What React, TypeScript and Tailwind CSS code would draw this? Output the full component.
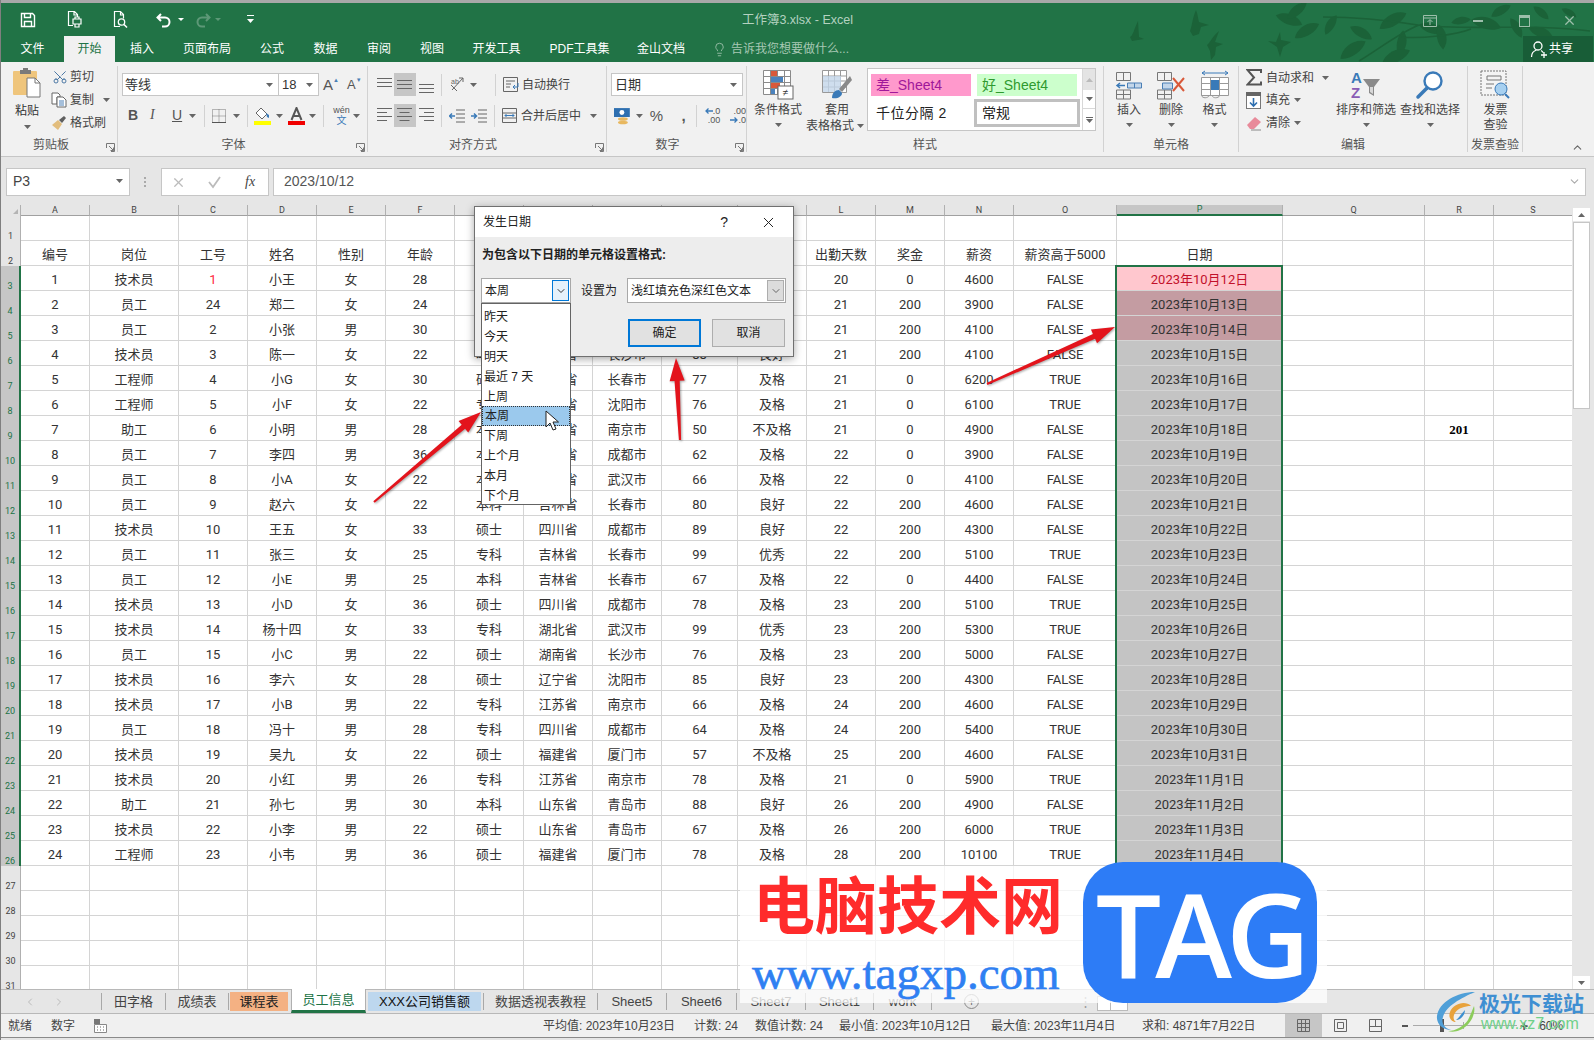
import type { ReactNode } from 'react'
import { Scissors, Lightbulb, X, ChevronDown, ChevronUp, ChevronLeft, ChevronRight } from 'lucide-react'

const COLS = [
  'w-[69px]', 'w-[89px]', 'w-[69px]', 'w-[69px]', 'w-[69px]', 'w-[69px]', 'w-[69px]', 'w-[69px]', 'w-[69px]',
  'w-[76px]', 'w-[69px]', 'w-[69px]', 'w-[69px]', 'w-[69px]', 'w-[103px]', 'w-[166px]', 'w-[142px]', 'w-[69px]', 'w-[79px]',
]
const LETTERS = ['A', 'B', 'C', 'D', 'E', 'F', 'G', 'H', 'I', 'J', 'K', 'L', 'M', 'N', 'O', 'P', 'Q', 'R', 'S']
const HEADER = ['编号', '岗位', '工号', '姓名', '性别', '年龄', '学历', '籍贯', '城市', '分数', '等级', '出勤天数', '奖金', '薪资', '薪资高于5000', '日期']

const DATA = [
  '1 技术员 1 小王 女 28 本科 江苏省 南京市 70 及格 20 0 4600 FALSE',
  '2 员工 24 郑二 女 24 本科 四川省 成都市 68 及格 21 200 3900 FALSE',
  '3 员工 2 小张 男 30 硕士 湖北省 武汉市 72 及格 21 200 4100 FALSE',
  '4 技术员 3 陈一 女 22 本科 湖南省 长沙市 88 良好 21 200 4100 FALSE',
  '5 工程师 4 小G 女 30 硕士 吉林省 长春市 77 及格 21 0 6200 TRUE',
  '6 工程师 5 小F 女 22 专科 辽宁省 沈阳市 76 及格 21 0 6100 TRUE',
  '7 助工 6 小明 男 28 本科 江苏省 南京市 50 不及格 21 0 4900 FALSE',
  '8 员工 7 李四 男 36 本科 四川省 成都市 62 及格 22 0 3900 FALSE',
  '9 员工 8 小A 女 22 本科 湖北省 武汉市 66 及格 22 0 4100 FALSE',
  '10 员工 9 赵六 女 22 本科 吉林省 长春市 80 良好 22 200 4600 FALSE',
  '11 技术员 10 王五 女 33 硕士 四川省 成都市 89 良好 22 200 4300 FALSE',
  '12 员工 11 张三 女 25 专科 吉林省 长春市 99 优秀 22 200 5100 TRUE',
  '13 员工 12 小E 男 25 本科 吉林省 长春市 67 及格 22 0 4400 FALSE',
  '14 技术员 13 小D 女 36 硕士 四川省 成都市 78 及格 23 200 5100 TRUE',
  '15 技术员 14 杨十四 女 33 专科 湖北省 武汉市 99 优秀 23 200 5300 TRUE',
  '16 员工 15 小C 男 22 硕士 湖南省 长沙市 76 及格 23 200 5000 FALSE',
  '17 技术员 16 李六 女 28 硕士 辽宁省 沈阳市 85 良好 23 200 4300 FALSE',
  '18 技术员 17 小B 男 22 专科 江苏省 南京市 66 及格 24 200 4600 FALSE',
  '19 员工 18 冯十 男 28 专科 四川省 成都市 64 及格 24 200 5400 TRUE',
  '20 技术员 19 吴九 女 22 硕士 福建省 厦门市 57 不及格 25 200 4600 FALSE',
  '21 技术员 20 小红 男 26 专科 江苏省 南京市 78 及格 21 0 5900 TRUE',
  '22 助工 21 孙七 男 30 本科 山东省 青岛市 88 良好 26 200 4900 FALSE',
  '23 技术员 22 小李 男 22 硕士 山东省 青岛市 67 及格 26 200 6000 TRUE',
  '24 工程师 23 小韦 男 36 硕士 福建省 厦门市 78 及格 28 200 10100 TRUE',
].map(r => r.split(' '))

const DATES = [
  ...Array.from({ length: 20 }, (_, i) => `2023年10月${i + 12}日`),
  ...Array.from({ length: 4 }, (_, i) => `2023年11月${i + 1}日`),
]

const MENU: [string, string][] = [
  ['文件', 'w-[63px]'], ['开始', 'w-[51px]'], ['插入', 'w-[54px]'], ['页面布局', 'w-[76px]'], ['公式', 'w-[54px]'],
  ['数据', 'w-[53px]'], ['审阅', 'w-[54px]'], ['视图', 'w-[52px]'], ['开发工具', 'w-[77px]'], ['PDF工具集', 'w-[89px]'], ['金山文档', 'w-[74px]'],
]

function Caret({ className = '' }: { className?: string }) {
  return (
    <svg width="7" height="4" viewBox="0 0 7 4" className={className}>
      <path d="M0 0h7L3.5 4z" fill="#666" />
    </svg>
  )
}

function Group({ w, label, labelPad = '', launcher, children }: { w: string; label: string; labelPad?: string; launcher?: boolean; children: ReactNode }) {
  return (
    <div className={`relative flex h-[86px] shrink-0 flex-col border-r border-[#d2d2d2] ${w}`}>
      <div className="relative h-[72px]">{children}</div>
      <div className={`mt-[2px] text-center text-xs leading-[14px] text-[#555] ${labelPad}`}>{label}</div>
      {launcher && (
        <svg width="9" height="9" viewBox="0 0 9 9" className="absolute bottom-0 right-[2px]">
          <path d="M.5 5V.5H8.5V8.5H5M3 3L7.5 7.5M7.5 4.5V7.5H4.5" fill="none" stroke="#777" />
        </svg>
      )}
    </div>
  )
}

function Big({ w, ml, icon, lines, caret = true }: { w: string; ml?: string; icon: ReactNode; lines: string[]; caret?: boolean }) {
  return (
    <div className={`flex shrink-0 flex-col items-center ${w} ${ml ?? ''}`}>
      <div className="mt-[4px] mb-[2px] flex h-[30px] items-center justify-center">{icon}</div>
      {lines.map(l => <div key={l} className="mt-[1px] whitespace-nowrap text-xs leading-[14px] text-[#444]">{l}</div>)}
      {caret && <Caret className="mt-[6px]" />}
    </div>
  )
}

function AlignLines({ y, side }: { y: number; side: 'l' | 'c' | 'r' | 'f' }) {
  const ws = side === 'f' ? [15, 15, 15] : [15, 10, 15, 10]
  return (
    <svg width="16" height="18" viewBox="0 0 16 18">
      {ws.map((w, i) => {
        const x = side === 'l' ? 0 : side === 'r' ? 15 - w : (15 - w) / 2
        return <rect key={i} x={x} y={y + i * 4} width={w} height="1" fill="#666" />
      })}
    </svg>
  )
}

function Arrow({ x1, y1, x2, y2 }: { x1: number; y1: number; x2: number; y2: number }) {
  const d = Math.hypot(x2 - x1, y2 - y1)
  const ux = (x2 - x1) / d
  const uy = (y2 - y1) / d
  const bx = x2 - ux * 23
  const by = y2 - uy * 23
  const pts = [
    [x1 - uy * 1.1, y1 + ux * 1.1], [bx - uy * 2.6, by + ux * 2.6], [bx - uy * 7.5, by + ux * 7.5], [x2, y2],
    [bx + uy * 7.5, by - ux * 7.5], [bx + uy * 2.6, by - ux * 2.6], [x1 + uy * 1.1, y1 - ux * 1.1],
  ]
  return <polygon points={pts.map(p => p.join(',')).join(' ')} fill="#e3141c" />
}

function Decor() {
  const leaves: [number, number, number, number][] = [
    [1288, 17, 20, 1], [1296, 8, -40, 0.9], [1306, 28, -30, 1], [1330, 22, -60, 0.8], [1352, 47, -35, 1.1],
    [1360, 30, 30, 0.9], [1392, 18, -30, 1.1], [1400, 40, 100, 0.9], [1430, 26, 20, 0.9], [1395, 54, -25, 1.1],
    [1440, 34, 80, 0.9], [1460, 18, -10, 0.7], [1485, 21, 15, 1.1], [1500, 8, -30, 0.8], [1515, 25, 60, 0.8], [1540, 30, 20, 0.9], [1540, 10, 40, 0.7], [1568, 10, 30, 0.6],
  ]
  return (
    <svg className="pointer-events-none absolute inset-0" width="1594" height="62" viewBox="0 0 1594 62">
      <g fill="#1b6238">
        <path d="M1129 34c3-1 4-8 8-16l1 16 5 2-12 2z" />
        <path d="M1189 28c2-4 2-12 6-21 2 5 2 9 3 12l10 3-8 2-2 7-6 2z" />
        <path d="M1206 42c3-2 4-7 12-14l-4 11 8 2-7 3-1 8-4 5-1-9z" />
        <path d="M1267 38l8 1 4-10 1 8 10 2-8 5-3 10-3-10z" />
        {leaves.map(([x, y, r, s], i) => (
          <path key={i} transform={`translate(${x} ${y}) rotate(${r}) scale(${s})`} d="M-14 0C-7 -8 7 -8 14 0C7 6 -7 6 -14 0Z" />
        ))}
      </g>
      <path d="M1322 14c40 0 70 4 95 8 50 6 110-2 172 6M1418 22c-20 8-40 24-60 36M1470 26c-15 6-50 10-70 8" stroke="#1b6238" strokeWidth="1.6" fill="none" />
    </svg>
  )
}

function Swirl() {
  return (
    <svg width="46" height="44" viewBox="0 0 46 44">
      <path d="M40 2C22 2 4 12 2 26c-1 8 6 14 14 14-7-2-10-7-8-13C11 16 26 8 40 2z" fill="#4f9fd8" />
      <path d="M36 16C30 10 18 14 15 22c-2 5 1 10 6 10-3-2-3-6-1-9 3-5 10-7 16-7z" fill="#e8a23c" />
      <path d="M39 16c2 8-4 20-14 24-4 2-9 2-12 1 8 0 16-5 20-11 2-4 4-9 6-14z" fill="#8ccc5c" />
      <path d="M30 20c0 5-4 10-9 10 3-2 5-6 9-10z" fill="#3d8fd0" />
    </svg>
  )
}

export default function App() {
  return (
    <div className="relative flex h-[1040px] w-[1594px] flex-col overflow-hidden border-l border-[#7f7f7f] bg-[#e6e6e6] font-['Liberation_Sans','Noto_Sans_CJK_SC',sans-serif] text-xs text-[#444]">
      <div className="h-[3px] shrink-0 bg-[#a8a8a8]" />

      {/* Title + menu */}
      <div className="relative h-[59px] shrink-0 bg-[#217346]">
        <Decor />
        <div className="relative flex h-[33px] items-center">
          <svg width="16" height="16" viewBox="0 0 16 16" className="ml-[19px]">
            <path d="M1.500 1.500h11l2 2v11h-13zM4.500 1.500v4h6v-4M4.500 14.500v-5h7v5" fill="none" stroke="#fff" strokeWidth="1.4" />
          </svg>
          <svg width="18" height="19" viewBox="0 0 18 19" className="ml-[29px]">
            <path d="M8 15.500H3.500v-14h6l3 3v3M9 1.500v3.500h3.500" fill="none" stroke="#fff" strokeWidth="1.2" />
            <path d="M8 9h8v5H8zM10 9V7h4v2M10 14v3h4v-3" fill="#217346" stroke="#fff" strokeWidth="1.2" />
          </svg>
          <svg width="18" height="19" viewBox="0 0 18 19" className="ml-[28px]">
            <path d="M9 16.500H3.500v-15h6l3 3v4M9.500 1.500v3.500h3" fill="none" stroke="#fff" strokeWidth="1.200" />
            <circle cx="10.500" cy="12" r="3.200" fill="none" stroke="#fff" strokeWidth="1.300" />
            <path d="M13 14.500l3 3" stroke="#fff" strokeWidth="1.600" />
          </svg>
          <svg width="16" height="16" viewBox="0 0 16 16" className="ml-[27px]">
            <path d="M5 2L1.500 5.500 5 9M2 5.500h7a4.500 4.500 0 0 1 0 9H6" fill="none" stroke="#fff" strokeWidth="2" />
          </svg>
          <svg width="6" height="3" viewBox="0 0 6 3" className="ml-[6px]"><path d="M0 0h6L3 3z" fill="#fff" /></svg>
          <svg width="16" height="16" viewBox="0 0 16 16" className="ml-[11px]">
            <path d="M11 2l3.500 3.500L11 9M14 5.500H7a4.500 4.500 0 0 0 0 9h3" fill="none" stroke="#5d9877" strokeWidth="2" />
          </svg>
          <svg width="6" height="3" viewBox="0 0 6 3" className="ml-[4px]"><path d="M0 0h6L3 3z" fill="#5d9877" /></svg>
          <svg width="7" height="9" viewBox="0 0 7 9" className="ml-[26px]"><path d="M0 0h7v1H0zM0 4h7L3.500 8z" fill="#fff" /></svg>
        </div>
        <div className="absolute left-0 right-0 top-[9px] text-center text-[12.5px] leading-4 text-[#b4d2c0]">工作簿3.xlsx - Excel</div>
        <div className="absolute right-[17px] top-[10px] flex items-center">
          <svg width="14" height="12" viewBox="0 0 14 12"><path d="M.5.500h13v11H.5zM.5 3h13M7 10V5M4.500 7L7 4.500 9.500 7" fill="none" stroke="#9dbfab" /></svg>
          <div className="ml-[36px] h-[2px] w-[10px] bg-[#9dbfab]" />
          <div className="ml-[36px] h-[12px] w-[11px] border border-t-[3px] border-[#9dbfab]" />
          <X size={15} strokeWidth={2} className="ml-[32px] text-[#9dbfab]" />
        </div>
        <div className="relative flex h-[26px] items-stretch">
          {MENU.map(([t, w]) => (
            <div key={t} className={`flex items-center justify-center ${w} ${t === '开始' ? 'bg-[#f1f1f1] text-[#217346]' : 'text-white'}`}>{t}</div>
          ))}
          <Lightbulb size={15} strokeWidth={1.3} className="ml-[14px] self-center text-[#a7c8b4]" />
          <div className="ml-[4px] self-center text-[#a7c8b4]">告诉我您想要做什么...</div>
          <div className="absolute bottom-0 right-[1px] top-0 flex w-[70px] items-center bg-[#185d37] pl-[7px] text-white">
            <svg width="18" height="18" viewBox="0 0 18 18"><circle cx="8" cy="6" r="4" fill="none" stroke="#fff" strokeWidth="1.300" /><path d="M1.500 17c0-4 2-6 5-7M11 10.500c1 .5 1.500 1 2 2M11 15h6M14 12v6" fill="none" stroke="#fff" strokeWidth="1.300" /></svg>
            <span className="ml-[1px]">共享</span>
          </div>
        </div>
      </div>

      {/* Ribbon */}
      <div className="relative flex h-[95px] shrink-0 border-b border-[#c6c6c6] bg-[#f1f1f1] pt-[4px]">
        <Group w="w-[117px]" label="剪贴板" labelPad="pr-[16px]" launcher>
          <div className="flex">
            <div className="ml-[8px] flex w-[36px] flex-col items-center">
              <svg width="30" height="32" viewBox="0 0 30 32" className="mt-[1px]">
                <rect x="1" y="4" width="24" height="24" rx="1" fill="#efc57c" />
                <path d="M8 3h3V1h5v2h3v4H8z" fill="#7a7a7a" />
                <path d="M15 11h8l5 5v14H15z" fill="#fff" stroke="#777" />
                <path d="M23 11v5h5" fill="none" stroke="#777" />
              </svg>
              <div className="mt-[5px] leading-[14px] text-[#333]">粘贴</div>
              <Caret className="mt-[7px]" />
            </div>
            <div className="ml-[6px] -mt-px flex flex-col">
              <div className="flex h-[23px] items-center"><Scissors size={16} strokeWidth={1.4} className="ml-px -rotate-90 text-[#41709f]" /><span className="ml-[2px] text-[#444]">剪切</span></div>
              <div className="flex h-[23px] items-center">
                <svg width="16" height="16" viewBox="0 0 16 16"><path d="M1 1h6l2 2v2H6v7H1z" fill="#fff" stroke="#666" /><path d="M6 5h6l3 3v7H6z" fill="#fff" stroke="#666" /><path d="M8 9h5M8 11h5M8 13h5" stroke="#4a7fb5" /></svg>
                <span className="ml-[3px]">复制</span><Caret className="ml-[9px]" />
              </div>
              <div className="flex h-[23px] items-center">
                <svg width="16" height="16" viewBox="0 0 16 16"><path d="M1 10l6-5 4 4-4 6z" fill="#e2bd7d" /><path d="M8 5l5-4 2 2-4 5z" fill="#5f5f5f" /></svg>
                <span className="ml-[3px]">格式刷</span>
              </div>
            </div>
          </div>
        </Group>

        <Group w="w-[250px]" label="字体" labelPad="pr-[18px]" launcher>
          <div className="mt-[7px] flex items-center">
            <div className="ml-[4px] flex h-[23px] w-[157px] items-center justify-between border border-[#c6c6c6] bg-white px-[2px] pr-[5px] text-[13px] text-[#333]">等线<Caret /></div>
            <div className="flex h-[23px] w-[40px] items-center justify-between border border-l-0 border-[#c6c6c6] bg-white pl-[3px] pr-[5px] text-[13px] text-[#333]">18<Caret /></div>
            <div className="ml-[4px] flex items-start font-['Liberation_Sans'] text-[15px] leading-4 text-[#555]">A<span className="text-[6px] leading-[6px] text-[#4a7fb5]">▲</span></div>
            <div className="ml-[8px] flex items-start font-['Liberation_Sans'] text-[13px] leading-4 text-[#555]">A<span className="text-[6px] leading-[6px] text-[#4a7fb5]">▼</span></div>
          </div>
          <div className="mt-[8px] flex h-[23px] items-center text-[14px] text-[#555]">
            <span className="ml-[10px] w-[22px] font-bold">B</span>
            <span className="w-[22px] font-['Liberation_Serif'] italic">I</span>
            <span className="w-[17px] font-medium underline">U</span>
            <Caret />
            <div className="ml-[8px] h-[22px] w-px bg-[#d2d2d2]" />
            <svg width="14" height="14" viewBox="0 0 14 14" className="ml-[7px]"><path d="M.5.500h13v13H.5zM.5 7h13M7 .500v13" fill="none" stroke="#777" strokeDasharray="1 1" /><path d="M0 13.500h14" stroke="#555" /></svg>
            <Caret className="ml-[7px]" />
            <div className="ml-[7px] h-[22px] w-px bg-[#d2d2d2]" />
            <svg width="17" height="18" viewBox="0 0 17 18" className="ml-[6px]"><path d="M7 1l6 6-5 5-6-6z" fill="#fff" stroke="#666" /><path d="M12 6l3 2v3l-2-1z" fill="#3a7ab8" /><rect y="14" width="17" height="4" fill="#ffff00" /></svg>
            <Caret className="ml-[5px]" />
            <svg width="17" height="18" viewBox="0 0 17 18" className="ml-[5px]"><path d="M3.500 13L8.500 1l5 12M5.500 9h6" fill="none" stroke="#555" strokeWidth="2" /><rect y="14" width="17" height="4" fill="#f00000" /></svg>
            <Caret className="ml-[4px]" />
            <div className="ml-[7px] h-[22px] w-px bg-[#d2d2d2]" />
            <div className="ml-[9px] flex w-[17px] flex-col items-center text-[9px] leading-[9px] text-[#555]">wén<span className="text-[10px] leading-[11px] text-[#3a7ab8]">文</span></div>
            <Caret className="ml-[3px]" />
          </div>
        </Group>

        <Group w="w-[239px]" label="对齐方式" labelPad="pr-[28px]" launcher>
          <div className="mt-[7px] flex h-[23px] items-center">
            <div className="ml-[8px] flex w-[18px] justify-center"><AlignLines y={2} side="f" /></div>
            <div className="flex h-[23px] w-[22px] items-center justify-center bg-[#c6c6c6]"><AlignLines y={4} side="f" /></div>
            <div className="ml-[2px] flex w-[18px] justify-center"><AlignLines y={8} side="f" /></div>
            <div className="ml-[5px] h-[22px] w-px bg-[#d2d2d2]" />
            <svg width="17" height="17" viewBox="0 0 17 17" className="ml-[7px]"><path d="M2 9l6 6M14 2L3 14M14 2h-4M14 2v4" fill="none" stroke="#666" /><text x="2" y="8" fontSize="7" fill="#666">ab</text></svg>
            <Caret className="ml-[4px]" />
            <div className="ml-[18px] h-[22px] w-px bg-[#d2d2d2]" />
            <svg width="16" height="16" viewBox="0 0 16 16" className="ml-[7px]"><path d="M.5.500h14v14H.5zM3 4h9M3 7h5M3 10h4" fill="none" stroke="#666" /><path d="M15 6v4H10M12 8l-2 2 2 2" fill="none" stroke="#3a7ab8" /></svg>
            <span className="ml-[3px]">自动换行</span>
          </div>
          <div className="mt-[8px] flex h-[23px] items-center">
            <div className="ml-[8px] flex w-[18px] justify-center"><AlignLines y={1} side="l" /></div>
            <div className="flex h-[23px] w-[22px] items-center justify-center bg-[#c6c6c6]"><AlignLines y={1} side="c" /></div>
            <div className="ml-[2px] flex w-[18px] justify-center"><AlignLines y={1} side="r" /></div>
            <div className="ml-[5px] h-[22px] w-px bg-[#d2d2d2]" />
            <svg width="16" height="14" viewBox="0 0 16 14" className="ml-[7px]"><path d="M7 1h9M7 5h9M7 9h9M7 13h9" stroke="#666" /><path d="M6 7H1M3 4.500L.5 7 3 9.500" fill="none" stroke="#3a7ab8" strokeWidth="1.500" /></svg>
            <svg width="16" height="14" viewBox="0 0 16 14" className="ml-[6px]"><path d="M7 1h9M7 5h9M7 9h9M7 13h9" stroke="#666" /><path d="M0 7h5M3 4.500L5.500 7 3 9.500" fill="none" stroke="#3a7ab8" strokeWidth="1.500" /></svg>
            <div className="ml-[7px] h-[22px] w-px bg-[#d2d2d2]" />
            <svg width="16" height="16" viewBox="0 0 16 16" className="ml-[7px]"><path d="M.5.500h14v14H.5zM.5 5h14M.5 10h14" fill="none" stroke="#666" /><path d="M3 7.500h9M4.500 6L3 7.500 4.500 9M10.500 6L12 7.500 10.500 9" fill="#f1f1f1" stroke="#3a7ab8" /></svg>
            <span className="ml-[3px]">合并后居中</span>
            <Caret className="ml-[9px]" />
          </div>
        </Group>

        <Group w="w-[140px]" label="数字" labelPad="pr-[18px]" launcher>
          <div className="mt-[7px] ml-[4px] flex h-[23px] w-[132px] items-center justify-between border border-[#c6c6c6] bg-white pl-[3px] pr-[5px] text-[13px] text-[#333]">日期<Caret /></div>
          <div className="mt-[8px] flex h-[23px] items-center">
            <svg width="17" height="18" viewBox="0 0 17 18" className="ml-[7px]"><rect x="0" y="1" width="16" height="9" fill="#2e6fb0" /><circle cx="8" cy="5.500" r="2.500" fill="#fff" /><ellipse cx="9" cy="12" rx="5" ry="1.800" fill="#e8b860" /><ellipse cx="9" cy="15.500" rx="5" ry="1.800" fill="#e8b860" /></svg>
            <Caret className="ml-[5px]" />
            <span className="ml-[7px] w-[20px] text-[15px] text-[#555]">%</span>
            <span className="ml-[12px] w-[8px] font-bold text-[15px] leading-3 text-[#555]">,</span>
            <div className="ml-[7px] h-[22px] w-px bg-[#d2d2d2]" />
            <div className="ml-[6px] flex w-[17px] flex-col items-end text-[9px] leading-[9px] text-[#555]">
              <div className="flex items-center"><svg width="8" height="6" viewBox="0 0 8 6"><path d="M8 3H1M3.500.500L1 3l2.500 2.500" fill="none" stroke="#3a7ab8" strokeWidth="1.300" /></svg>.0</div>
              <span>.00</span>
            </div>
            <div className="ml-[9px] flex w-[17px] flex-col items-end text-[9px] leading-[9px] text-[#555]">
              <span>.00</span>
              <div className="flex items-center"><svg width="8" height="6" viewBox="0 0 8 6"><path d="M0 3h7M4.500.500L7 3 4.500 5.500" fill="none" stroke="#3a7ab8" strokeWidth="1.300" /></svg>.0</div>
            </div>
          </div>
        </Group>

        <Group w="w-[357px]" label="样式">
          <div className="flex">
            <Big w="w-[56px]" ml="ml-[3px]" lines={['条件格式']} icon={
              <svg width="31" height="30" viewBox="0 0 31 30">
                <path d="M.5.500h27v24H.5zM.5 6.500h27M.5 12.500h27M.5 18.500h27M7.500.500v24M14.500.500v24M21.500.500v24" fill="#fff" stroke="#8a8a8a" />
                <rect x="8" y="1" width="6" height="5" fill="#d9593a" /><rect x="8" y="7" width="12" height="5" fill="#4a82bd" /><rect x="8" y="13" width="9" height="5" fill="#d9593a" /><rect x="8" y="19" width="4" height="5" fill="#4a82bd" />
                <rect x="15" y="16" width="15" height="13" fill="#fff" stroke="#666" />
                <text x="22.500" y="26" textAnchor="middle" fontSize="10" fill="#333">≠</text>
              </svg>
            } />
            <Big w="w-[62px]" lines={['套用']} caret={false} icon={
              <svg width="30" height="30" viewBox="0 0 30 30">
                <path d="M.5.500h24v22H.5zM.5 6h24M.5 11h24M.5 17h24M6.500.500v22M12.500.500v22M18.500.500v22" fill="#fff" stroke="#999" />
                <rect x="1" y="6" width="18" height="16" fill="#c3d6ea" opacity=".8" />
                <path d="M28 6L17 19l3 3L30 10z" fill="#8a8a8a" /><path d="M10 28c0-5 3-8 7-8l3 3c0 4-5 6-10 5z" fill="#3a7ab8" />
              </svg>
            } />
            <div className="absolute left-[59px] top-[53px] flex items-center whitespace-nowrap leading-[14px]">表格格式<Caret className="ml-[3px]" /></div>
            <div className="-ml-px mt-[2px] flex h-[63px] w-[229px] border border-[#c6c6c6] bg-white">
              <div className="grid w-[212px] grid-cols-[106px_106px] grid-rows-[30px_28px]">
                <div className="mx-[3px] mt-[5px] mb-[3px] flex items-center bg-[#ff99cc] pl-[5px] text-[14px] text-[#a0189a]">差_Sheet4</div>
                <div className="mx-[3px] mt-[5px] mb-[3px] flex items-center bg-[#ccffcc] pl-[5px] text-[14px] text-[#2f9a2f]">好_Sheet4</div>
                <div className="flex items-center pl-[8px] text-[14px] tracking-[0.5px] text-[#222]">千位分隔 2</div>
                <div className="flex items-center border-[3px] border-[#c0c0c0] pl-[5px] text-[14px] text-[#222]">常规</div>
              </div>
              <div className="ml-[2px] flex w-[13px] flex-col border-l border-[#d8d8d8]">
                <div className="flex h-[21px] items-center justify-center bg-[#e4e4e4]"><svg width="7" height="4" viewBox="0 0 7 4"><path d="M0 4h7L3.500 0z" fill="#bbb" /></svg></div>
                <div className="flex h-[19px] items-center justify-center border-b border-[#d8d8d8]"><Caret /></div>
                <div className="flex flex-1 flex-col items-center justify-center"><div className="mb-[1px] h-px w-[7px] bg-[#666]" /><Caret /></div>
              </div>
            </div>
          </div>
        </Group>

        <Group w="w-[135px]" label="单元格">
          <div className="flex">
            <Big w="w-[42px]" ml="ml-[4px]" lines={['插入']} icon={
              <svg width="28" height="29" viewBox="0 0 28 29"><path d="M1.500 1.500h14v8h-14zM8.500 1.500v8M1.500 19h14v9h-14zM1.500 23.500h14M8.500 19v9" fill="none" stroke="#777" /><path d="M12.500 12h14v5h-14zM19.500 12v5" fill="#c3d6ea" stroke="#4a7fb5" /><path d="M10 14.500H2M5 12L2 14.500 5 17" fill="none" stroke="#3a7ab8" strokeWidth="1.500" /></svg>
            } />
            <Big w="w-[42px]" lines={['删除']} icon={
              <svg width="30" height="29" viewBox="0 0 30 29"><path d="M1.500 1.500h14v8h-14zM8.500 1.500v8M1.500 19h14v9h-14zM1.500 23.500h14M8.500 19v9" fill="none" stroke="#777" /><path d="M6.500 12h10v6h-10z" fill="#c3d6ea" stroke="#4a7fb5" /><path d="M17 7l11 13M28 7L17 20" stroke="#d9593a" strokeWidth="2" /></svg>
            } />
            <Big w="w-[45px]" lines={['格式']} icon={
              <svg width="28" height="31" viewBox="0 0 28 31"><path d="M1 3h26M1 3l3-2M1 3l3 2M27 3l-3-2M27 3l-3 2" fill="none" stroke="#3a7ab8" /><path d="M.5 7.500h27v18H.5zM.5 13.500h27M.5 19.500h27M9.500 7.500v18M18.500 7.500v18" fill="#fff" stroke="#999" /><rect x="10" y="10" width="8" height="10" fill="#3a7ab8" /><path d="M.5 25.500c1 3 6 3 8 0M11 25.500c1 3 6 3 8 0" fill="none" stroke="#999" /></svg>
            } />
          </div>
        </Group>

        <Group w="w-[229px]" label="编辑">
          <div className="flex">
            <div className="ml-[7px] flex w-[89px] shrink-0 flex-col">
              <div className="flex h-[23px] items-center"><svg width="16" height="17" viewBox="0 0 16 17"><path d="M15 4V1H1.500L8 8.500 1.500 15.500H15v-3" fill="none" stroke="#555" strokeWidth="2" /></svg><span className="ml-[4px]">自动求和</span><Caret className="ml-[8px]" /></div>
              <div className="flex h-[22px] items-center"><svg width="15" height="17" viewBox="0 0 15 17"><rect x=".5" y=".5" width="14" height="16" fill="#fff" stroke="#777" /><rect x="0" y="0" width="15" height="4" fill="#666" /><path d="M7.500 6v8M4 10.500l3.500 3.500L11 10.500" fill="none" stroke="#2e6fb0" strokeWidth="1.600" /></svg><span className="ml-[5px]">填充</span><Caret className="ml-[4px]" /></div>
              <div className="flex h-[23px] items-center"><svg width="16" height="16" viewBox="0 0 16 16"><path d="M1 10L9 2l6 5-7 7H4z" fill="#e88a9a" /><path d="M5 15h10" stroke="#888" /></svg><span className="ml-[4px]">清除</span><Caret className="ml-[4px]" /></div>
            </div>
            <Big w="w-[62px]" lines={['排序和筛选']} icon={
              <svg width="30" height="30" viewBox="0 0 30 30"><text x="0" y="13" fontSize="15" fontWeight="bold" fill="#3a7ab8">A</text><text x="0" y="28" fontSize="15" fontWeight="bold" fill="#8a5cb5">Z</text><path d="M12 9h17l-6 8v9l-5-3v-6z" fill="#8a8a8a" /><path d="M19 17v5l3 2v-7" fill="#d8d8d8" /></svg>
            } />
            <Big w="w-[66px]" lines={['查找和选择']} icon={
              <svg width="30" height="30" viewBox="0 0 30 30"><circle cx="18" cy="11" r="8.500" fill="#fff" stroke="#3a7ab8" strokeWidth="2.400" /><path d="M12 18L3 27" stroke="#3a7ab8" strokeWidth="3.500" strokeLinecap="round" /></svg>
            } />
          </div>
        </Group>

        <Group w="w-[55px]" label="发票查验">
          <Big w="w-[55px]" lines={['发票', '查验']} caret={false} icon={
            <svg width="31" height="30" viewBox="0 0 31 30"><path d="M1 1h25v24H1z" fill="#f4f4f4" stroke="#777" strokeDasharray="2 1" /><path d="M7 6h14v4H7zM6 14h8M6 18h6" fill="none" stroke="#777" /><circle cx="21" cy="19" r="6" fill="#a7d0f0" stroke="#3a7ab8" /><path d="M25 24l4 4" stroke="#3a7ab8" strokeWidth="2" /></svg>
          } />
        </Group>
        <ChevronUp size={13} strokeWidth={2} className="absolute bottom-[2px] right-[10px] text-[#666]" />
      </div>

      {/* Formula bar */}
      <div className="flex h-[48px] shrink-0 bg-[#e6e6e6] pt-[11px]">
        <div className="ml-[5px] flex h-[28px] w-[124px] items-center justify-between border border-[#c6c6c6] bg-white pb-[2px] pl-[6px] pr-[6px] text-sm text-[#444]">P3<Caret /></div>
        <div className="ml-[14px] mr-[15px] flex h-[28px] flex-col justify-center gap-[2px]">
          <div className="h-[2px] w-[2px] bg-[#aaa]" /><div className="h-[2px] w-[2px] bg-[#aaa]" /><div className="h-[2px] w-[2px] bg-[#aaa]" />
        </div>
        <div className="flex h-[28px] w-[108px] items-center border border-[#c6c6c6] bg-white">
          <X size={15} className="ml-[9px] text-[#bbb]" />
          <svg width="15" height="14" viewBox="0 0 15 14" className="ml-[21px]"><path d="M2 7l4 5 7-10" fill="none" stroke="#bbb" strokeWidth="1.800" /></svg>
          <span className="ml-[23px] font-['Liberation_Serif'] text-sm italic text-[#444]">fx</span>
        </div>
        <div className="ml-[4px] flex h-[28px] w-[1313px] items-center justify-between border border-[#c6c6c6] bg-white pb-[2px] pl-[10px] pr-[4px] text-sm text-[#555]">2023/10/12<ChevronDown size={13} className="text-[#aaa]" /></div>
      </div>

      {/* Sheet */}
      <div className="relative flex h-[784px] shrink-0">
        <div className="w-[1571px] shrink-0 overflow-hidden bg-white font-['Roboto','Noto_Sans_CJK_SC',sans-serif]">
          <div className="flex h-[11px] bg-[#e6e6e6]">
            <div className="flex w-[20px] shrink-0 items-end justify-end border-r border-[#b0b0b0] p-[2px]"><svg width="5" height="5" viewBox="0 0 5 5"><path d="M5 0v5H0z" fill="#b4b4b4" /></svg></div>
            {LETTERS.map((l, i) => (
              <div key={l} className={`flex shrink-0 items-center justify-center border-r border-[#b0b0b0] text-[9px] leading-none text-[#444] ${COLS[i]} ${l === 'P' ? 'border-b-2 border-b-[#217346] bg-[#c6c6c6] text-[#217346]' : 'border-b border-b-[#a0a0a0]'}`}>{l}</div>
            ))}
          </div>
          {Array.from({ length: 31 }, (_, r) => {
            const row = r + 1
            const rec = row >= 3 && row <= 26 ? DATA[row - 3] : null
            const sel = rec !== null
            const cells = row === 2 ? HEADER : rec ? [...rec, DATES[row - 3]] : []
            return (
              <div key={row} className="flex h-[25px]">
                <div className={`flex w-[20px] shrink-0 items-end justify-center text-[9px] leading-[10px] ${sel ? 'border-r-2 border-[#217346] bg-[#c6c6c6] text-[#217346]' : 'border-r border-[#b0b0b0] bg-[#e6e6e6] text-[#444]'}`}>{row}</div>
                {LETTERS.map((l, c) => {
                  const isP = l === 'P' && sel
                  const bg = !isP ? '' : row === 3 ? 'bg-[#ffc7ce] text-[#c2102a]' : row <= 5 ? 'bg-[#c49ca2] text-[#8c1a2a]' : 'bg-[#c4c4c4]'
                  const red = row === 3 && l === 'C' ? 'text-[#ff1f3d]' : ''
                  const bold = row === 9 && l === 'R'
                  return (
                    <div key={l} className={`flex shrink-0 items-center justify-center overflow-hidden whitespace-nowrap border-b border-r border-[#d4d4d4] pt-[3px] text-[13px] leading-none text-[#333] ${COLS[c]} ${bg} ${red} ${bold ? "font-['Liberation_Serif'] font-bold text-black" : ''}`}>
                      {bold ? '201' : cells[c] ?? ''}
                    </div>
                  )
                })}
              </div>
            )
          })}
        </div>
        <div className="absolute left-[1114px] top-[60px] h-[601px] w-[168px] border-2 border-[#217346]" />

        {/* Vertical scrollbar */}
        <div className="flex w-[18px] shrink-0 flex-col items-center bg-[#e6e6e6]">
          <div className="mt-[3px] flex h-[13px] w-[17px] items-center justify-center bg-white"><svg width="7" height="4" viewBox="0 0 7 4"><path d="M0 4h7L3.500 0z" fill="#666" /></svg></div>
          <div className="mt-[1px] h-[187px] w-[17px] border border-[#c6c6c6] bg-white" />
          <div className="flex-1" />
          <div className="flex h-[13px] w-[17px] items-center justify-center bg-white"><Caret /></div>
        </div>
      </div>

      {/* Sheet tabs */}
      <div className="flex h-[25px] shrink-0 items-stretch border-b border-t border-[#b8b8b8] bg-[#e6e6e6] text-[13px] text-[#444]">
        <div className="flex w-[100px] shrink-0 items-center text-[#bbb]"><ChevronLeft size={12} strokeWidth={2} className="ml-[23px]" /><ChevronRight size={12} strokeWidth={2} className="ml-[17px]" /></div>
        <div className="my-[3px] flex w-[64px] shrink-0 items-center justify-center border-l border-[#a8a8a8]">田字格</div>
        <div className="my-[3px] flex w-[63px] shrink-0 items-center justify-center border-l border-[#a8a8a8]">成绩表</div>
        <div className="my-[3px] border-l border-[#a8a8a8]" />
        <div className="my-[2px] ml-[1px] flex w-[58px] shrink-0 items-center justify-center bg-[#f4b183] text-[#222]">课程表</div>
        <div className="-mt-px ml-[3px] flex w-[75px] shrink-0 items-center justify-center border-b-[3px] border-l border-r border-[#b0b0b0] border-b-[#217346] bg-white text-[#217346]">员工信息</div>
        <div className="my-[2px] ml-[2px] flex w-[113px] shrink-0 items-center justify-center bg-[#bdd7ee] text-[#111]">XXX公司销售额</div>
        <div className="my-[3px] ml-[2px] flex w-[114px] shrink-0 items-center justify-center border-l border-[#a8a8a8]">数据透视表教程</div>
        <div className="my-[3px] flex w-[69px] shrink-0 items-center justify-center border-l border-[#a8a8a8]">Sheet5</div>
        <div className="my-[3px] flex w-[70px] shrink-0 items-center justify-center border-l border-[#a8a8a8]">Sheet6</div>
        <div className="my-[3px] flex w-[69px] shrink-0 items-center justify-center border-l border-[#a8a8a8]">Sheet7</div>
        <div className="my-[3px] flex w-[68px] shrink-0 items-center justify-center border-l border-[#a8a8a8]">Sheet1</div>
        <div className="my-[3px] flex w-[58px] shrink-0 items-center justify-center border-l border-[#a8a8a8]">work</div>
        <div className="my-[3px] border-l border-[#a8a8a8]" />
        <div className="ml-[32px] mt-[4px] flex h-[15px] w-[15px] items-center justify-center rounded-full border border-[#888] text-xs leading-none text-[#666]">+</div>
        <div className="ml-[100px] flex w-[4px] items-center text-[#999]">⋮</div>
        <div className="ml-[14px] mt-[6px] flex h-[15px] w-[31px]">
          <div className="w-[14px] border border-[#bbb] bg-white" />
          <div className="w-[17px] border border-l-0 border-[#bbb] bg-white" />
        </div>
        <div className="ml-auto mr-[22px] flex items-center text-[#777]"><ChevronRight size={11} strokeWidth={2} /></div>
      </div>

      {/* Status bar */}
      <div className="flex h-[24px] shrink-0 items-center border-b border-[#8a8a8a] bg-[#f0f0f0] text-xs text-[#444]">
        <span className="ml-[7px] w-[43px]">就绪</span>
        <span className="w-[43px]">数字</span>
        <svg width="13" height="14" viewBox="0 0 13 14"><rect x="0" y="0" width="6" height="5" fill="#777" /><path d="M.5 5.500h12v8H.5z" fill="#fff" stroke="#888" /><path d="M3 8h1M6 8h1M9 8h1M3 11h1M6 11h1M9 11h1" stroke="#666" /></svg>
        <div className="ml-[436px] w-[151px]">平均值: 2023年10月23日</div>
        <div className="w-[61px]">计数: 24</div>
        <div className="w-[84px]">数值计数: 24</div>
        <div className="w-[152px]">最小值: 2023年10月12日</div>
        <div className="w-[151px]">最大值: 2023年11月4日</div>
        <div className="w-[143px]">求和: 4871年7月22日</div>
        <div className="flex h-[23px] w-[37px] items-center justify-center bg-[#c6c6c6]">
          <svg width="13" height="13" viewBox="0 0 13 13"><path d="M.5.500h12v12H.5zM.5 4.500h12M.5 8.500h12M4.500.500v12M8.500.500v12" fill="none" stroke="#666" /></svg>
        </div>
        <svg width="13" height="13" viewBox="0 0 13 13" className="ml-[12px]"><path d="M.5.500h12v12H.5zM3.500 3.500h6v6h-6z" fill="none" stroke="#666" /></svg>
        <svg width="13" height="13" viewBox="0 0 13 13" className="ml-[22px]"><path d="M.5.500h12v12H.5zM6.500.500v7M.5 7.500h12" fill="none" stroke="#666" /></svg>
        <div className="ml-[20px] h-[2px] w-[6px] bg-[#555]" />
        <div className="relative ml-[5px] h-px w-[104px] bg-[#aaa]">
          <div className="absolute left-[27px] top-[-6px] h-[13px] w-[4px] bg-[#555]" />
          <div className="absolute left-[50px] top-[-3px] h-[7px] w-px bg-[#aaa]" />
        </div>
        <span className="ml-[3px] text-sm font-bold leading-none text-[#555]">+</span>
        <span className="ml-[11px]">60%</span>
      </div>

      {/* Watermark */}
      <div className="pointer-events-none absolute left-[739px] top-[866px] h-[137px] w-[587px] bg-white/75">
        <div className="ml-[13px] mt-[-4px] whitespace-nowrap font-['Noto_Sans_CJK_SC'] text-[62px] font-bold leading-[80px] text-[#ff2b2b]">电脑技术网</div>
        <div className="ml-[12px] mt-[10px] whitespace-nowrap font-['Liberation_Serif'] text-[47px] leading-[42px] text-[#2f80f2] [-webkit-text-stroke:0.6px_#2f80f2]">www.tagxp.com</div>
      </div>
      <div className="pointer-events-none absolute left-[1082px] top-[862px] flex h-[141px] w-[234px] items-center justify-center overflow-hidden rounded-[40px] bg-[#2d7cf6] font-['Open_Sans'] text-[116px] font-semibold leading-none tracking-[-6px] text-white">TAG</div>

      {/* Corner logo */}
      <div className="pointer-events-none absolute left-[1434px] top-[990px]"><Swirl /></div>
      <div className="pointer-events-none absolute left-[1478px] top-[990px] whitespace-nowrap font-['Noto_Sans_CJK_SC'] text-[21px] font-bold leading-[24px] text-[#3f8fd2]">极光下载站</div>
      <div className="pointer-events-none absolute left-[1480px] top-[1015px] whitespace-nowrap font-['Liberation_Sans'] text-[16px] leading-[18px] text-[#6fd08a]">www.xz7.com</div>

      {/* Dialog */}
      <div className="absolute left-[473px] top-[206px] h-[151px] w-[320px] border border-[#707070] bg-[#ededed] shadow-[0_2px_8px_rgba(0,0,0,0.35)]">
        <div className="flex h-[30px] items-center bg-white pl-[8px] text-xs text-[#222]">
          发生日期
          <span className="ml-auto text-sm font-medium">?</span>
          <X size={17} strokeWidth={1.4} className="ml-[32px] mr-[16px] text-[#222]" />
        </div>
        <div className="ml-[7px] mt-[11px] text-xs font-bold leading-[14px] text-[#222]">为包含以下日期的单元格设置格式:</div>
        <div className="mt-[16px] flex items-center">
          <div className="ml-[6px] flex h-[25px] w-[90px] items-center justify-between border border-[#a8a8a8] bg-white pl-[3px] pr-[1px] text-[#222]">
            本周
            <div className="flex h-[21px] w-[17px] items-center justify-center border border-[#0078d7] bg-[#e5f1fb]"><ChevronDown size={12} className="text-[#333]" /></div>
          </div>
          <span className="ml-[10px] text-[#222]">设置为</span>
          <div className="ml-[10px] flex h-[25px] w-[159px] items-center justify-between border border-[#a8a8a8] bg-white pl-[3px] pr-[1px] text-[#222]">
            浅红填充色深红色文本
            <div className="flex h-[21px] w-[17px] items-center justify-center border border-[#adadad] bg-[#dcdcdc]"><ChevronDown size={12} className="text-[#666]" /></div>
          </div>
        </div>
        <div className="mt-[16px] flex">
          <div className="ml-[153px] flex h-[28px] w-[73px] items-center justify-center border-2 border-[#0078d7] bg-[#e1e1e1] text-[#222]">确定</div>
          <div className="ml-[11px] flex h-[28px] w-[73px] items-center justify-center border border-[#adadad] bg-[#e1e1e1] text-[#222]">取消</div>
        </div>
      </div>

      {/* Dropdown list */}
      <div className="absolute left-[480px] top-[303px] flex h-[202px] w-[90px] flex-col border border-[#646464] bg-white pt-[3px] text-xs text-[#222]">
        {['昨天', '今天', '明天', '最近 7 天', '上周', '本周', '下周', '上个月', '本月', '下个月'].map(t => (
          <div key={t} className={`flex h-[19.9px] shrink-0 items-center pl-[2px] ${t === '本周' ? 'border border-dotted border-[#333] bg-[#9bc9ed] pl-[1px]' : ''}`}>{t}</div>
        ))}
      </div>
      <svg className="pointer-events-none absolute left-[544px] top-[410px]" width="15" height="22" viewBox="0 0 15 22">
        <path d="M1 1v16l4-4 3 7 3-1-3-7h5.500z" fill="#fff" stroke="#222" strokeWidth="1" />
      </svg>

      {/* Annotation arrows */}
      <svg className="pointer-events-none absolute inset-0 drop-shadow-[1px_1px_1px_rgba(0,0,0,0.35)]" width="1594" height="1040" viewBox="0 0 1594 1040">
        <Arrow x1={373} y1={502} x2={480} y2={412} />
        <Arrow x1={679} y1={440} x2={675} y2={358} />
        <Arrow x1={986} y1={384} x2={1114} y2={327} />
      </svg>
    </div>
  )
}
